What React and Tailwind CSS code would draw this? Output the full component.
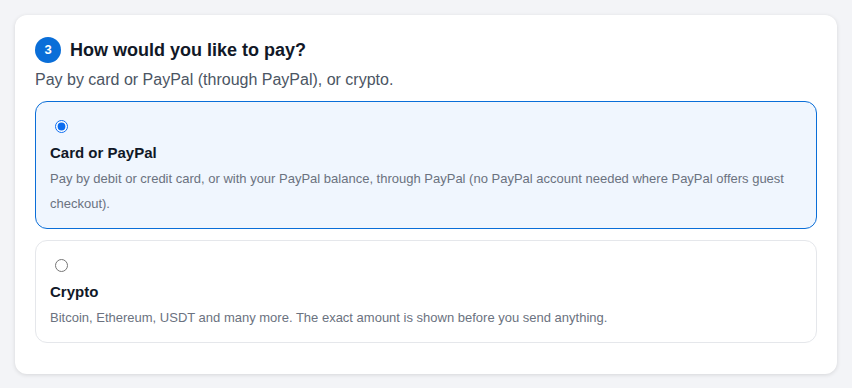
import React, { useState } from "react";

const options = [
  {
    id: "card",
    title: "Card or PayPal",
    text: "Pay by debit or credit card, or with your PayPal balance, through PayPal (no PayPal account needed where PayPal offers guest checkout).",
  },
  {
    id: "crypto",
    title: "Crypto",
    text: "Bitcoin, Ethereum, USDT and many more. The exact amount is shown before you send anything.",
  },
];

function App() {
  const [method, setMethod] = useState("card");

  return (
    <div className="min-h-screen bg-[#f3f4f7] p-[15px] font-['Liberation_Sans',Arial,sans-serif]">
      <div className="w-[822px] rounded-xl bg-white px-5 pt-[22px] pb-[31px] shadow-[0_1px_4px_rgba(0,0,0,0.12)]">
        <div className="flex items-center gap-[9px]">
          <span className="flex h-[26px] w-[26px] items-center justify-center rounded-full bg-[#0a6ed8] text-[13px] font-bold text-white">
            3
          </span>
          <h2 className="text-[18px] font-bold leading-6 text-[#111827]">
            How would you like to pay?
          </h2>
        </div>
        <p className="mt-[5px] text-[16px] leading-6 text-[#4b5563]">
          Pay by card or PayPal (through PayPal), or crypto.
        </p>

        <div className="mt-[9px] flex flex-col gap-[11px]">
          {options.map((opt) => {
            const active = method === opt.id;
            return (
              <label
                key={opt.id}
                className={
                  active
                    ? "block cursor-pointer rounded-xl border border-[#0a6ed8] bg-[#f0f6fe] px-[14px] pt-[15px] pb-3"
                    : "block cursor-pointer rounded-xl border border-[#e5e7eb] bg-white px-[14px] pt-[15px] pb-3"
                }
              >
                <input
                  type="radio"
                  name="pay"
                  checked={active}
                  onChange={() => setMethod(opt.id)}
                  className="ml-[5px] mt-[3px] block h-[13px] w-[13px] accent-[#0b6cf0]"
                />
                <div className="mt-[10px] text-[15px] font-bold leading-5 text-[#111827]">
                  {opt.title}
                </div>
                <p className="mt-[3px] text-[13px] leading-[25px] text-[#6b7280]">
                  {opt.text}
                </p>
              </label>
            );
          })}
        </div>
      </div>
    </div>
  );
}

export default App;
